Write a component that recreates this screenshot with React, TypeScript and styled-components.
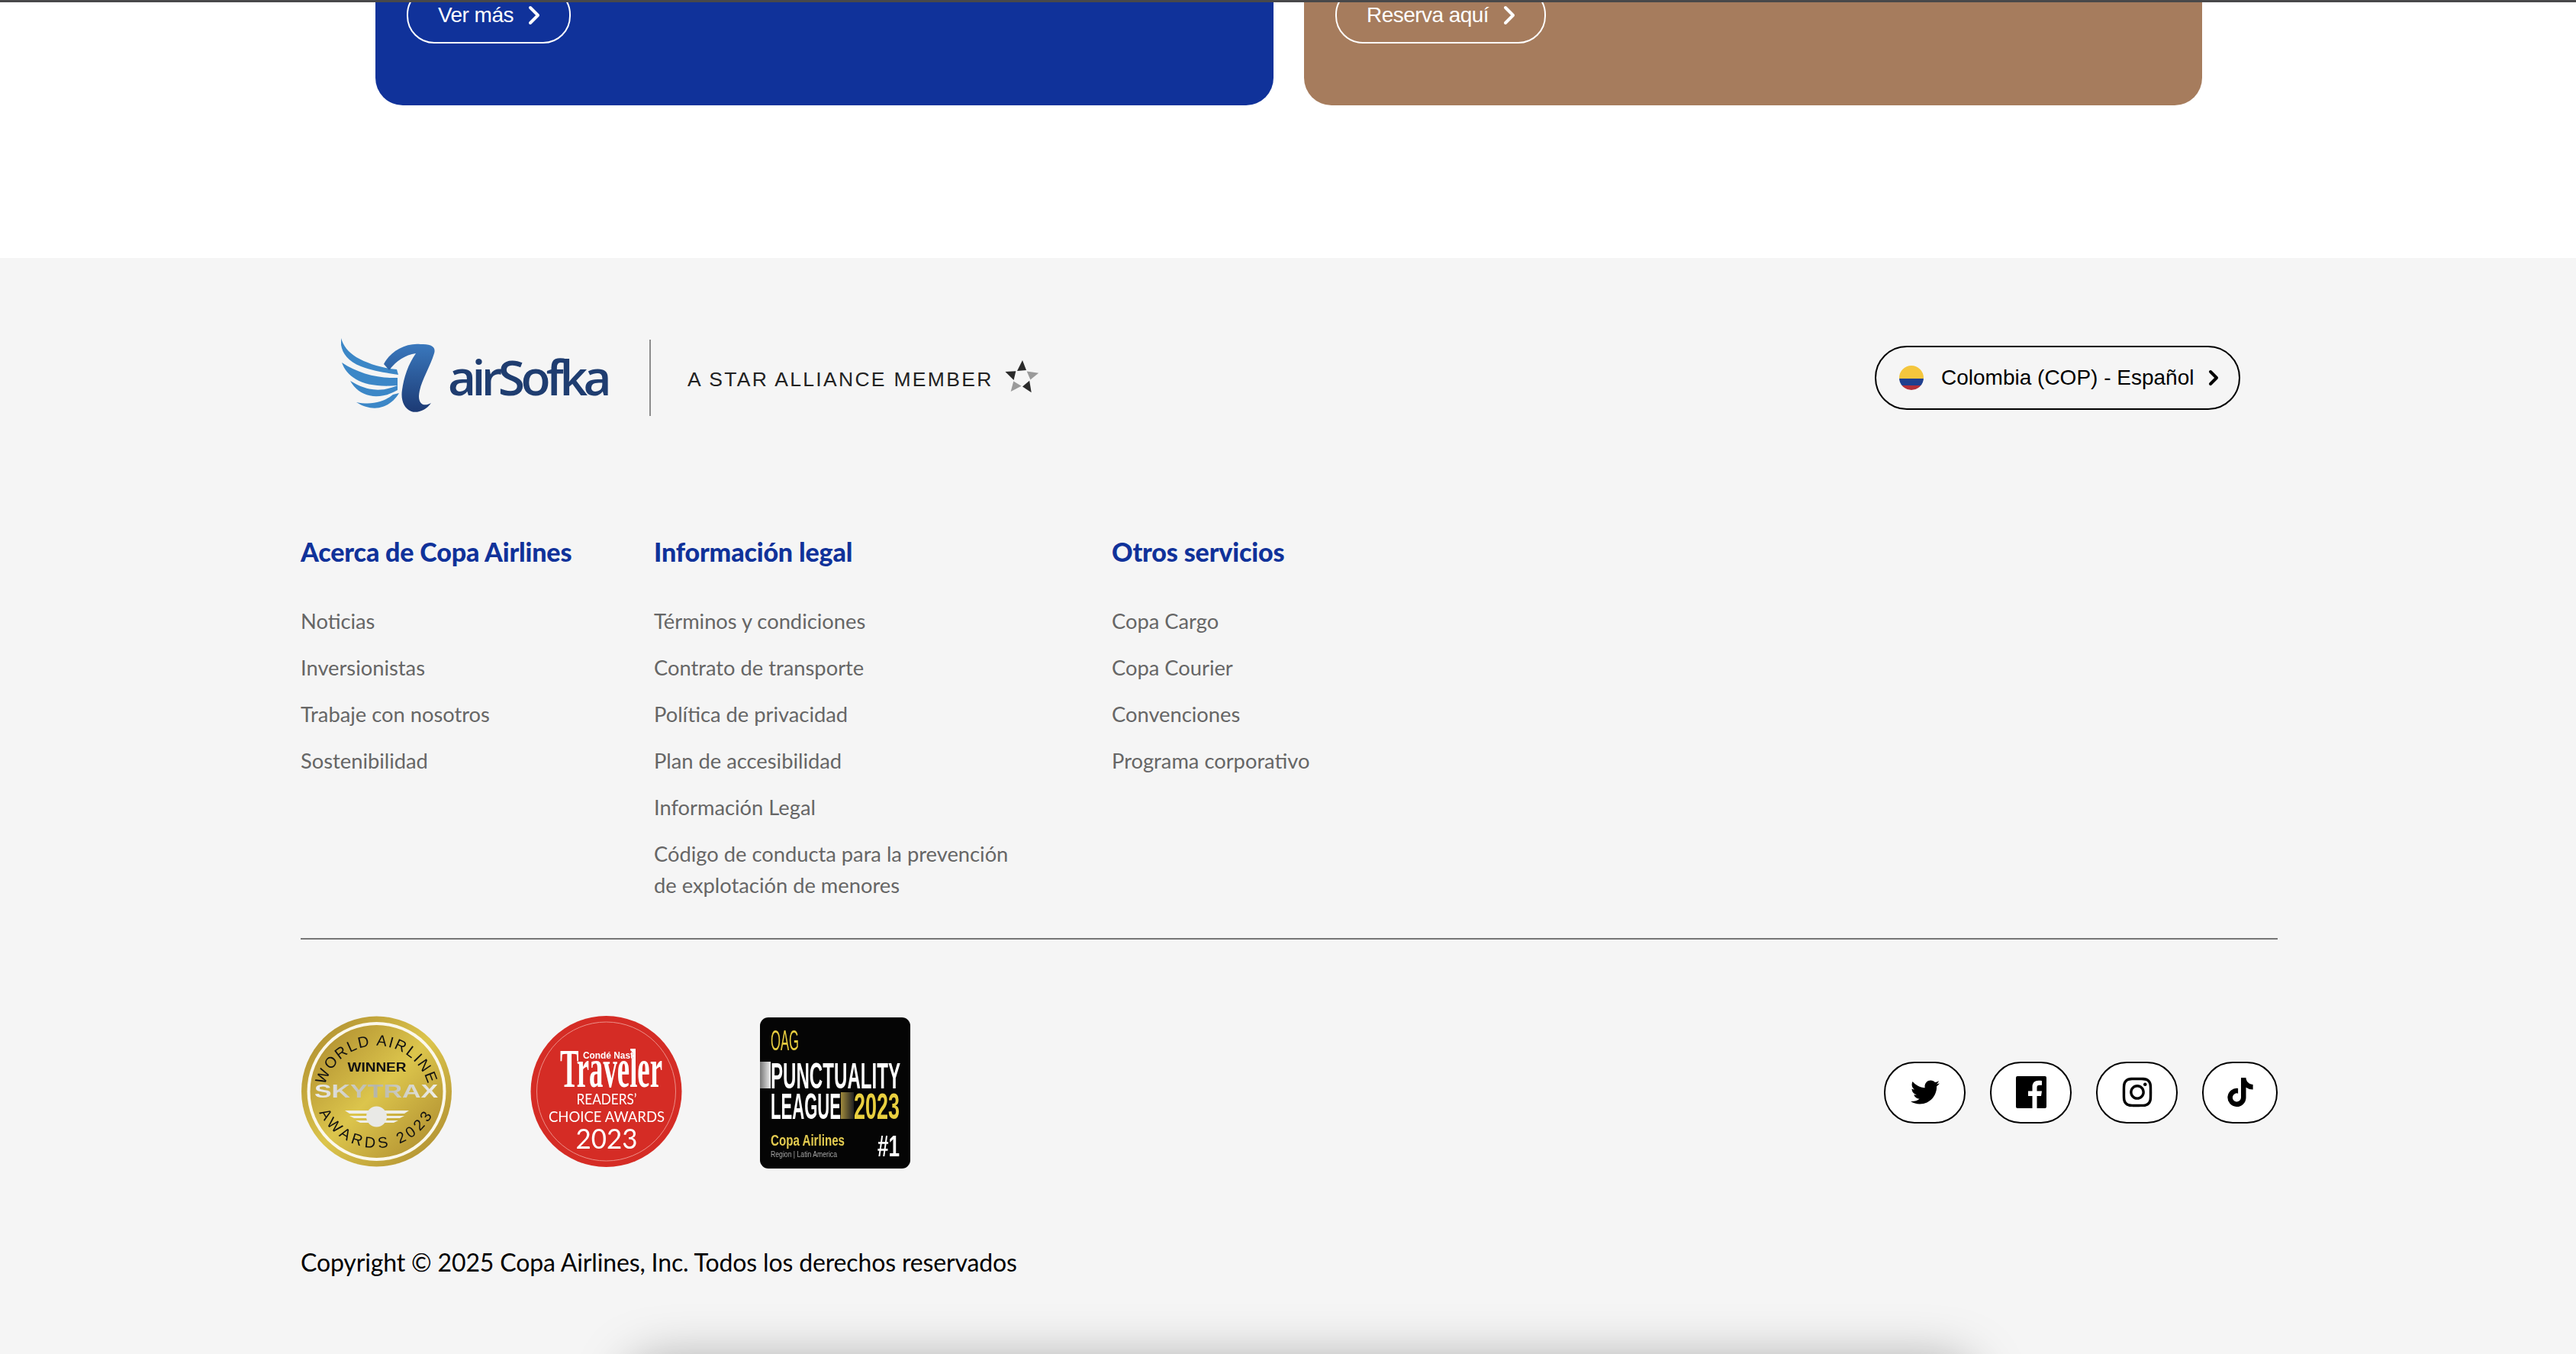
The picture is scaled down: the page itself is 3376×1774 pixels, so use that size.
import React from 'react';
import styled, { createGlobalStyle } from 'styled-components';
import { ChevronRight } from 'lucide-react';
import { FaTwitter, FaInstagram, FaTiktok } from 'react-icons/fa';

const GlobalStyle = createGlobalStyle`
    html, body {
        margin: 0;
        padding: 0;
        background: #fff;
    }
    * {
        box-sizing: border-box;
    }
`;

const Page = styled.div`
    position: relative;
    width: 3376px;
    height: 1774px;
    overflow: hidden;
    display: flex;
    flex-direction: column;
    font-family: "Lato", "Liberation Sans", sans-serif;
`;

const TopEdge = styled.div`
    height: 3px;
    background: #48484a;
    flex: none;
`;

const Promos = styled.section`
    flex: none;
    height: 335px;
    background: #fff;
    display: flex;
    align-items: flex-start;
    gap: 40px;
    padding-left: 492px;
`;

const PromoCard = styled.div<{ $tone: string }>`
    width: 1177px;
    height: 135px;
    padding: 0 0 81px 41px;
    background: ${p => p.$tone};
    border-radius: 0 0 36px 36px;
    overflow: hidden;
    display: flex;
    align-items: flex-end;
`;

const PromoButton = styled.a`
    flex: none;
    height: 74px;
    padding: 0 26px 0 39px;
    border: 2px solid #fff;
    border-radius: 36px;
    display: flex;
    align-items: center;
    gap: 7px;
    color: #fff;
    font-family: "Liberation Sans", Arial, sans-serif;
    font-size: 28px;
    letter-spacing: -0.55px;
`;

const Footer = styled.footer`
    flex: 1;
    background: #f5f5f5;
    padding: 115px 391px 0 394px;
`;

const BrandRow = styled.div`
    display: flex;
    justify-content: space-between;
    align-items: center;
    height: 84px;
    padding: 0 49px 0 53px;
`;

const Brand = styled.div`
    display: flex;
    align-items: center;
`;

const WingLogo = styled.svg`
    width: 131px;
    height: 98px;
    margin-top: -6px;
    flex: none;
    filter: blur(0.4px);
`;

const Wordmark = styled.span`
    margin-left: 9px;
    width: 216px;
    color: #1f3d70;
    font-family: "Open Sans", sans-serif;
    font-size: 64px;
    font-weight: 600;
    letter-spacing: -5.6px;
    line-height: 98px;
    padding-bottom: 2px;
`;

const BrandRule = styled.span`
    width: 2px;
    height: 100px;
    margin: 0 48px 0 48px;
    background: #8d8d8d;
`;

const StarText = styled.span`
    padding-top: 5px;
    color: #222;
    font-family: "Liberation Sans", Arial, sans-serif;
    font-size: 26.5px;
    letter-spacing: 2.3px;
    white-space: nowrap;
`;

const StarMark = styled.svg`
    width: 46px;
    height: 46px;
    margin-left: 14px;
    flex: none;
`;

const LangButton = styled.button`
    width: 479px;
    height: 84px;
    padding: 0 17px 0 30px;
    background: transparent;
    border: 2px solid #000;
    border-radius: 42px;
    display: flex;
    align-items: center;
    color: #000;
    font-family: "Liberation Sans", Arial, sans-serif;
    font-size: 28px;
`;

const Flag = styled.span`
    width: 32px;
    height: 32px;
    margin-right: 23px;
    border-radius: 50%;
    flex: none;
    background: linear-gradient(#f4c63d 0 53%, #1f3f8f 53% 82%, #b3303a 82%);
`;

const LangLabel = styled.span`
    flex: 1;
    text-align: left;
    white-space: nowrap;
`;

const LinkColumns = styled.div`
    margin-top: 166px;
    display: grid;
    grid-template-columns: 463px 600px 1fr;
    padding-bottom: 49px;
    border-bottom: 2px solid #767676;
`;

const Column = styled.div`
    display: flex;
    flex-direction: column;
    gap: 50px;
`;

const ColumnTitle = styled.h3`
    margin: 0;
    color: #10329a;
    font-size: 34px;
    font-weight: 900;
    line-height: 40px;
    letter-spacing: -0.15px;
`;

const LinkList = styled.ul`
    margin: 0;
    padding: 0;
    list-style: none;
    display: flex;
    flex-direction: column;
    gap: 20px;
`;

const LinkItem = styled.li`
    max-width: 490px;
    color: #666;
    font-size: 27.3px;
    line-height: 41px;
`;

const AwardsRow = styled.div`
    padding-top: 99px;
    display: flex;
    justify-content: space-between;
    align-items: center;
`;

const Awards = styled.div`
    display: flex;
    gap: 102px;
`;

const AwardBadge = styled.svg`
    width: 199px;
    height: 202px;
    flex: none;
    filter: blur(0.5px);
`;

const Socials = styled.div`
    display: flex;
    gap: 32px;
`;

const SocialButton = styled.a<{ $narrow?: boolean }>`
    width: ${p => (p.$narrow ? '99px' : '107px')};
    height: 81px;
    border: 2px solid #000;
    border-radius: 40px;
    background: #fff;
    display: flex;
    align-items: center;
    justify-content: center;
    color: #000;
`;

const FacebookMark = styled.svg`
    width: 40px;
    height: 42px;
`;

const Copyright = styled.p`
    margin: 100px 0 0;
    color: #000;
    font-size: 32px;
    letter-spacing: -0.14px;
    line-height: 44px;
`;

const FloatingShadow = styled.div`
    position: absolute;
    left: 840px;
    top: 1800px;
    width: 1730px;
    height: 80px;
    background: #fff;
    border-radius: 20px;
    box-shadow: 0 0 70px 14px rgba(0, 0, 0, 0.36);
`;

const columns = [
    {
        title: 'Acerca de Copa Airlines',
        links: ['Noticias', 'Inversionistas', 'Trabaje con nosotros', 'Sostenibilidad'],
    },
    {
        title: 'Información legal',
        links: [
            'Términos y condiciones',
            'Contrato de transporte',
            'Política de privacidad',
            'Plan de accesibilidad',
            'Información Legal',
            'Código de conducta para la prevención de explotación de menores',
        ],
    },
    {
        title: 'Otros servicios',
        links: ['Copa Cargo', 'Copa Courier', 'Convenciones', 'Programa corporativo'],
    },
];

const Wing = () => (
    <WingLogo viewBox="0 0 131 98">
        <defs>
            <linearGradient id="logoA" x1="0" y1="0" x2="0" y2="1">
                <stop offset="0" stopColor="#3a78bd" />
                <stop offset="1" stopColor="#1c3a74" />
            </linearGradient>
        </defs>
        <g fill="#3c87c7">
            <path d="M0 0C-2 14 5 29 26 37C42 43 56 45 75 48L73 41C52 39 34 33 20 25C9 18 3 10 0 0Z" />
            <path d="M1 32C8 52 30 66 74 62L74 52C48 53 22 46 1 32Z" />
            <path d="M12 56C24 78 50 82 74 68L74 62C50 72 32 68 12 56Z" />
            <path d="M20 84C42 98 64 92 76 72L68 74C56 84 40 88 20 84Z" />
        </g>
        <path
            fill="url(#logoA)"
            d="M56 34C64 18 84 6 104 8C116 8 125 10 122 20C116 40 103 58 102 76C102 87 109 90 118 85C112 94 100 99 92 96C82 92 78 80 80 68C82 52 88 34 98 20C84 22 72 30 63 42Z"
        />
    </WingLogo>
);

const Star = () => (
    <StarMark viewBox="-23 -23 46 46">
        {[0, 72, 144, 216, 288].map((angle, i) => (
            <path
                key={angle}
                d="M1 -23L6 -10L-6 -9Z"
                fill={i === 1 || i === 3 ? '#9a9a9a' : '#2a2a2a'}
                transform={`rotate(${angle})`}
            />
        ))}
    </StarMark>
);

const Skytrax = () => (
    <AwardBadge viewBox="0 0 199 202">
        <defs>
            <linearGradient id="goldFace" x1="0" y1="0" x2="1" y2="1">
                <stop offset="0" stopColor="#a9862b" />
                <stop offset="0.5" stopColor="#dcc54c" />
                <stop offset="1" stopColor="#a9862c" />
            </linearGradient>
            <linearGradient id="silver" x1="0" y1="0" x2="1" y2="0">
                <stop offset="0" stopColor="#eee" />
                <stop offset="0.5" stopColor="#b5b5a8" />
                <stop offset="1" stopColor="#f0f0ea" />
            </linearGradient>
            <path id="arcTop" d="M29.5 110A70 70 0 1 1 169.5 110" />
            <path id="arcBottom" d="M15.5 90A84 84 0 1 0 183.5 90" />
        </defs>
        <circle cx="99.5" cy="100" r="98.5" fill="url(#goldFace)" />
        <circle cx="99.5" cy="100" r="91" fill="#fbf8ec" />
        <circle cx="99.5" cy="100" r="87" fill="url(#goldFace)" />
        <g fill="#111" fontFamily="Liberation Sans, sans-serif">
            <text fontSize="20" letterSpacing="2">
                <textPath href="#arcTop" startOffset="50%" textAnchor="middle">WORLD AIRLINE</textPath>
            </text>
            <text fontSize="20" letterSpacing="4.5">
                <textPath href="#arcBottom" startOffset="50%" textAnchor="middle">AWARDS 2023</textPath>
            </text>
            <text x="100" y="74" fontSize="16" fontWeight="700" textAnchor="middle" textLength="77" lengthAdjust="spacingAndGlyphs">WINNER</text>
        </g>
        <text x="99" y="108" fill="url(#silver)" fontFamily="Liberation Sans, sans-serif" fontSize="24" fontWeight="700" textAnchor="middle" textLength="162" lengthAdjust="spacingAndGlyphs">SKYTRAX</text>
        <g fill="#efefe8">
            <path d="M58 125H142L136 129H64Z" />
            <path d="M64 132H136L130 135H70Z" />
            <path d="M72 138H128L122 141H78Z" />
        </g>
        <circle cx="99.5" cy="133" r="13.5" fill="#e9e9e6" />
    </AwardBadge>
);

const Traveler = () => (
    <AwardBadge viewBox="0 0 199 202">
        <circle cx="99.5" cy="100" r="99" fill="#d52c25" />
        <circle cx="99.5" cy="100" r="91" fill="none" stroke="#ec8f88" strokeWidth="1" />
        <g fill="#fff" textAnchor="middle">
            <text x="106" y="94" fontFamily="Liberation Serif, serif" fontSize="72" fontWeight="700" textLength="134" lengthAdjust="spacingAndGlyphs">Traveler</text>
            <text x="102" y="57" fontFamily="Liberation Sans, sans-serif" fontSize="12" fontWeight="700" stroke="#d52c25" strokeWidth="0.4" paintOrder="stroke" textLength="66" lengthAdjust="spacingAndGlyphs">Condé Nast</text>
            <g fontFamily="Lato, sans-serif">
                <text x="100" y="117" fontSize="20" textLength="79" lengthAdjust="spacingAndGlyphs">READERS’</text>
                <text x="100" y="140" fontSize="20" textLength="152" lengthAdjust="spacingAndGlyphs">CHOICE AWARDS</text>
                <text x="100" y="175" fontSize="36" textLength="81" lengthAdjust="spacingAndGlyphs">2023</text>
            </g>
        </g>
    </AwardBadge>
);

const Punctuality = () => (
    <AwardBadge viewBox="0 0 199 202">
        <defs>
            <linearGradient id="fadeWhite" x1="0" y1="0" x2="1" y2="0">
                <stop offset="0" stopColor="#777" />
                <stop offset="1" stopColor="#eee" />
            </linearGradient>
            <linearGradient id="fadeGold" x1="0" y1="0" x2="1" y2="0">
                <stop offset="0" stopColor="#a08a3c" />
                <stop offset="1" stopColor="#222" />
            </linearGradient>
        </defs>
        <rect x="0" y="3" width="197" height="198" rx="11" fill="#050505" />
        <rect x="0" y="61" width="14" height="35" fill="url(#fadeWhite)" />
        <rect x="106" y="101" width="17" height="35" fill="url(#fadeGold)" />
        <g fontFamily="Liberation Sans, sans-serif" fontWeight="700">
            <text x="14" y="46" fill="#e6cc3f" fontSize="36" fontWeight="400" textLength="37" lengthAdjust="spacingAndGlyphs">OAG</text>
            <text x="14" y="96" fill="#fff" fontSize="48" textLength="170" lengthAdjust="spacingAndGlyphs">PUNCTUALITY</text>
            <text x="14" y="136" fill="#fff" fontSize="48" textLength="92" lengthAdjust="spacingAndGlyphs">LEAGUE</text>
            <text x="123" y="136" fill="#e9cf3f" fontSize="48" textLength="60" lengthAdjust="spacingAndGlyphs">2023</text>
            <text x="14" y="171" fill="#e3cb50" fontSize="20" textLength="97" lengthAdjust="spacingAndGlyphs">Copa Airlines</text>
            <text x="14" y="186" fill="#a5a5a5" fontSize="10" fontWeight="400" textLength="87" lengthAdjust="spacingAndGlyphs">Region | Latin America</text>
            <text x="154" y="185" fill="#fff" fontSize="38" textLength="29" lengthAdjust="spacingAndGlyphs">#1</text>
        </g>
    </AwardBadge>
);

const App: React.FC = () => {
    return (
        <Page>
            <GlobalStyle />
            <TopEdge />
            <Promos>
                <PromoCard $tone="#10329a">
                    <PromoButton>Ver más<ChevronRight size={40} strokeWidth={2.4} /></PromoButton>
                </PromoCard>
                <PromoCard $tone="#a67c5d">
                    <PromoButton>Reserva aquí<ChevronRight size={40} strokeWidth={2.4} /></PromoButton>
                </PromoCard>
            </Promos>
            <Footer>
                <BrandRow>
                    <Brand>
                        <Wing />
                        <Wordmark>airSofka</Wordmark>
                        <BrandRule />
                        <StarText>A STAR ALLIANCE MEMBER</StarText>
                        <Star />
                    </Brand>
                    <LangButton>
                        <Flag />
                        <LangLabel>Colombia (COP) - Español</LangLabel>
                        <ChevronRight size={32} strokeWidth={3} />
                    </LangButton>
                </BrandRow>
                <LinkColumns>
                    {columns.map(column => (
                        <Column key={column.title}>
                            <ColumnTitle>{column.title}</ColumnTitle>
                            <LinkList>
                                {column.links.map(link => <LinkItem key={link}>{link}</LinkItem>)}
                            </LinkList>
                        </Column>
                    ))}
                </LinkColumns>
                <AwardsRow>
                    <Awards>
                        <Skytrax />
                        <Traveler />
                        <Punctuality />
                    </Awards>
                    <Socials>
                        <SocialButton><FaTwitter size={38} /></SocialButton>
                        <SocialButton>
                            <FacebookMark viewBox="0 0 40 42">
                                <path d="M2 0H38a2 2 0 0 1 2 2V40a2 2 0 0 1-2 2H27.5V26h5.5l1-6.5h-6.5V15c0-2 .8-3.2 3.4-3.2H34V6c-1-.1-2.3-.3-4.5-.3-4.6 0-8 2.8-8 8.2v5.6H16V26h5.5V42H2a2 2 0 0 1-2-2V2a2 2 0 0 1 2-2Z" />
                            </FacebookMark>
                        </SocialButton>
                        <SocialButton><FaInstagram size={44} /></SocialButton>
                        <SocialButton $narrow><FaTiktok size={38} /></SocialButton>
                    </Socials>
                </AwardsRow>
                <Copyright>Copyright © 2025 Copa Airlines, Inc. Todos los derechos reservados</Copyright>
            </Footer>
            <FloatingShadow />
        </Page>
    );
};

export default App;
